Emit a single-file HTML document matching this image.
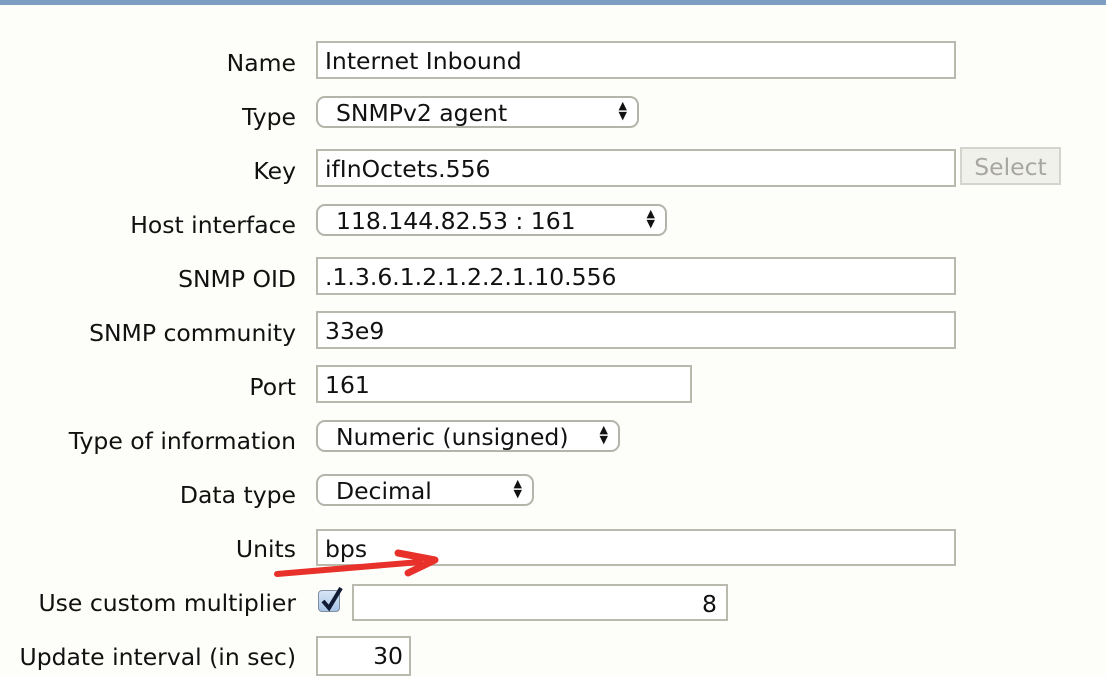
<!DOCTYPE html>
<html><head><meta charset="utf-8"><style>
body{margin:0;width:1106px;height:666px;background:#fdfdf9;position:relative;overflow:hidden;font-family:"DejaVu Sans",Verdana,sans-serif;font-size:23.5px;color:#111}
.bar{position:absolute;left:0;top:0;width:1106px;height:5px;background:#7b9ec2}
.l{position:absolute;right:810px;white-space:nowrap;line-height:28px}
.i{position:absolute;left:316px;height:36px;border:2px solid #bab9ad;background:#fff;box-sizing:border-box;line-height:36px;padding-left:7px;white-space:nowrap}
.s{position:absolute;left:316px;height:32px;border:2px solid #b5b4aa;border-radius:9px;background:#fff;box-sizing:border-box;line-height:30px;padding-left:18px;white-space:nowrap}
.s span{position:absolute;right:10px;top:3px;font-size:11px;line-height:10px;text-align:center}
</style></head><body>
<div class="bar"></div>
<div class="l" style="top:49px">Name</div>
<div class="i" style="top:41px;width:640px;height:38px">Internet Inbound</div>
<div class="l" style="top:103px">Type</div>
<div class="s" style="top:96px;width:323px">SNMPv2 agent<span>▲<br>▼</span></div>
<div class="l" style="top:157px">Key</div>
<div class="i" style="top:149px;width:640px;height:38px">ifInOctets.556</div>
<div style="position:absolute;left:960px;top:147px;width:101px;height:38px;border:2px solid #d4d3cc;background:#f1f1ec;box-sizing:border-box;color:#a8a79f;text-align:center;line-height:36px">Select</div>
<div class="l" style="top:211px">Host interface</div>
<div class="s" style="top:204px;width:351px">118.144.82.53 : 161<span>▲<br>▼</span></div>
<div class="l" style="top:265px">SNMP OID</div>
<div class="i" style="top:257px;width:640px;height:38px">.1.3.6.1.2.1.2.2.1.10.556</div>
<div class="l" style="top:319px">SNMP community</div>
<div class="i" style="top:311px;width:640px;height:38px">33e9</div>
<div class="l" style="top:373px">Port</div>
<div class="i" style="top:365px;width:376px;height:38px">161</div>
<div class="l" style="top:427px">Type of information</div>
<div class="s" style="top:420px;width:304px">Numeric (unsigned)<span>▲<br>▼</span></div>
<div class="l" style="top:481px">Data type</div>
<div class="s" style="top:474px;width:218px">Decimal<span>▲<br>▼</span></div>
<div class="l" style="top:535px">Units</div>
<div class="i" style="top:529px;width:640px;height:37px">bps</div>
<svg style="position:absolute;left:270px;top:548px" width="180" height="32"><path d="M7 26 L150 14" stroke="#e8312a" stroke-width="6" stroke-linecap="round"/><path d="M128 5 L165 12 L138 25" stroke="#e8312a" stroke-width="7" fill="none" stroke-linecap="round" stroke-linejoin="round"/></svg>
<div class="l" style="top:589px">Use custom multiplier</div>
<div style="position:absolute;left:318px;top:590px;width:22px;height:22px;border:1px solid #7f8ea3;border-radius:4px;background:linear-gradient(#d8e6f6,#a9c4e6);box-sizing:border-box"></div>
<svg style="position:absolute;left:316px;top:584px" width="30" height="30"><path d="M7 17 L13 24 L25 4" stroke="#111a33" stroke-width="4" fill="none"/></svg>
<div class="i" style="left:352px;top:584px;width:376px;height:37px;text-align:right;padding-right:9px">8</div>
<div class="l" style="top:643px">Update interval (in sec)</div>
<div class="i" style="top:636px;width:95px;height:40px;text-align:right;padding-right:6px">30</div>
</body></html>
